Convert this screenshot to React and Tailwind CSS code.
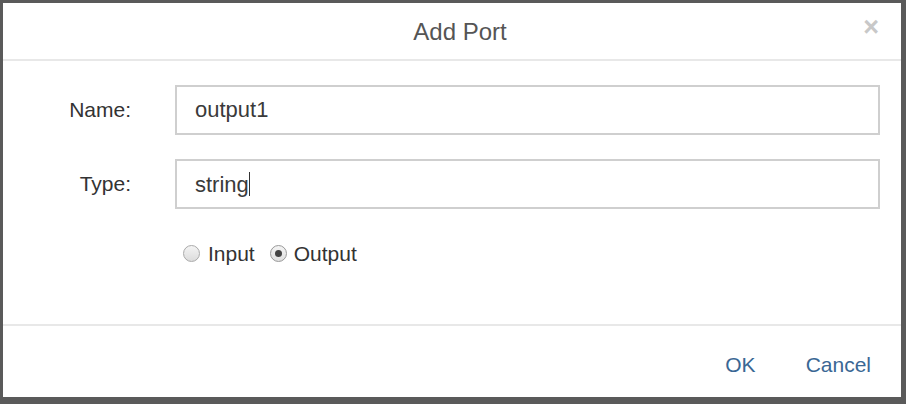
export default function App() {
  return (
    <div className="w-[906px] h-[404px] bg-[#5a5a5a] pt-[3px] pl-[3px] font-['Liberation_Sans',Arial,sans-serif]">
      <div className="w-[898px] h-[394px] bg-white flex flex-col">
        {/* header */}
        <div className="relative h-[58px] flex items-center justify-center pl-[16px] border-b-2 border-[#e8e8e8]">
          <span className="text-[24px] text-[#555] mt-[2px]">Add Port</span>
          <span className="absolute right-[22px] top-[11px] text-[27px] font-bold text-[#c8c8c8] leading-none">×</span>
        </div>

        {/* body */}
        <div className="flex-1 pt-[24px] pr-[21px]">
          <div className="flex items-center h-[50px]">
            <label className="w-[128px] text-right text-[21px] text-[#333]">Name:</label>
            <input
              readOnly
              value="output1"
              className="ml-[44px] flex-1 h-[50px] border-2 border-[#cfcfcf] px-[18px] text-[22px] text-[#3a3a3a] outline-none"
            />
          </div>
          <div className="flex items-center h-[50px] mt-[24px]">
            <label className="w-[128px] text-right text-[21px] text-[#333]">Type:</label>
            <div className="ml-[44px] flex-1 h-[50px] border-2 border-[#cfcfcf] px-[18px] text-[22px] text-[#3a3a3a] flex items-center">
              string<span className="w-px h-[24px] bg-[#333]" />
            </div>
          </div>
          <div className="flex items-center ml-[180px] mt-[29px] text-[21px] text-[#333]">
            <span className="w-[17px] h-[17px] rounded-full border border-[#aaa] bg-gradient-to-b from-[#f4f4f4] to-[#dcdcdc]" />
            <span className="ml-[8px]">Input</span>
            <span className="ml-[15px] w-[17px] h-[17px] rounded-full border border-[#999] bg-gradient-to-b from-[#f4f4f4] to-[#e0e0e0] flex items-center justify-center">
              <span className="w-[7px] h-[7px] rounded-full bg-[#444]" />
            </span>
            <span className="ml-[7px]">Output</span>
          </div>
        </div>

        {/* footer */}
        <div className="h-[73px] border-t-2 border-[#e8e8e8] flex items-center justify-end pr-[30px] gap-[50px] text-[21px] text-[#3a6794] pt-[6px]">
          <span>OK</span>
          <span>Cancel</span>
        </div>
      </div>
    </div>
  );
}
